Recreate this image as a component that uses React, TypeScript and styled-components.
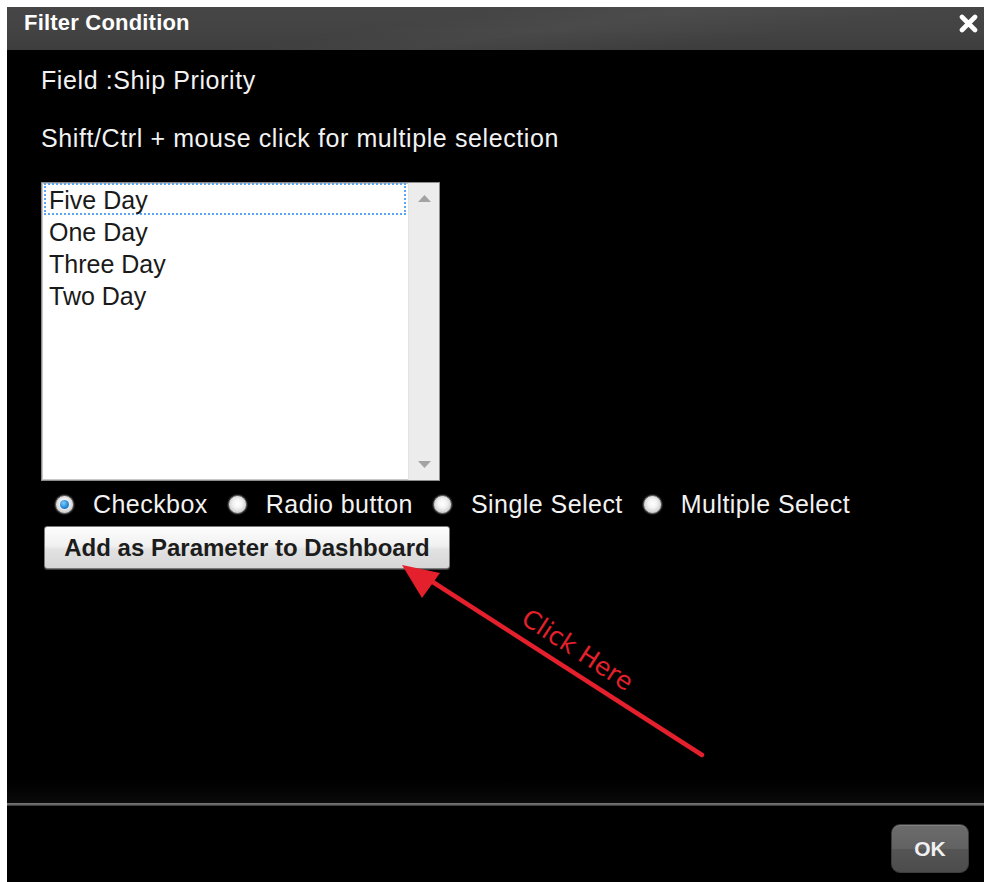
import React from "react";
import styled, { createGlobalStyle } from "styled-components";

const GlobalStyle = createGlobalStyle`
  html, body {
    margin: 0;
    padding: 0;
    background: #ffffff;
  }
  * { box-sizing: border-box; }
`;

const Dialog = styled.div`
  position: relative;
  margin: 7px 0 0 7px;
  width: 977px;
  height: 875px;
  background: #000;
  display: flex;
  flex-direction: column;
  font-family: "Liberation Sans", Arial, sans-serif;
  overflow: hidden;
`;

const Header = styled.div`
  height: 43px;
  flex: none;
  display: flex;
  align-items: center;
  justify-content: space-between;
  padding: 0 5px 11px 17px;
  background:
    linear-gradient(172deg, rgba(255,255,255,0) 40%, rgba(255,255,255,0.035) 55%, rgba(255,255,255,0) 75%),
    linear-gradient(to bottom, #464646 0%, #434343 55%, #3d3d3d 100%);
`;

const Title = styled.div`
  color: #ffffff;
  font-weight: bold;
  font-size: 22px;
  letter-spacing: 0.2px;
`;

const CloseButton = styled.button`
  width: 22px;
  height: 22px;
  padding: 0;
  border: 0;
  background: transparent;
  display: flex;
  align-items: center;
  justify-content: center;
  cursor: pointer;
`;

const Body = styled.div`
  height: 753px;
  flex: none;
  padding: 15px 0 0 34px;
  display: flex;
  flex-direction: column;
  align-items: flex-start;
  background: linear-gradient(to bottom, #000 0%, #000 97%, #0a0a0a 100%);
`;

const Line = styled.div<{ $gap?: number }>`
  color: #f2f2f2;
  font-size: 25px;
  line-height: 30px;
  letter-spacing: 0.6px;
  margin-top: ${(p) => p.$gap ?? 0}px;
`;

const ListBox = styled.div`
  margin-top: 29px;
  width: 399px;
  height: 299px;
  background: #fff;
  border: 1px solid #8c8c8c;
  box-shadow: inset 0 0 0 1px #c8c8c8;
  display: flex;
`;

const Options = styled.div`
  flex: 1;
  padding: 0 2px 0 2px;
  display: flex;
  flex-direction: column;
`;

const Option = styled.div<{ $focused?: boolean }>`
  height: 32px;
  line-height: 30px;
  padding-left: 3px;
  font-size: 25px;
  color: #1a1a1a;
  border: 2px dotted ${(p) => (p.$focused ? "#5aa6f5" : "transparent")};
`;

const ScrollTrack = styled.div`
  width: 31px;
  background: #ececec;
  border-left: 1px solid #e2e2e2;
  display: flex;
  flex-direction: column;
  justify-content: space-between;
  align-items: center;
  padding: 12px 0 12px 0;
`;

const RadioRow = styled.div`
  margin-top: 8px;
  margin-left: 14px;
  height: 30px;
  display: flex;
  align-items: center;
`;

const RadioItem = styled.label`
  display: flex;
  align-items: center;
  margin-right: 20px;
  color: #f2f2f2;
  font-size: 25px;
  letter-spacing: 0.45px;
`;

const RadioDot = styled.span<{ $checked?: boolean }>`
  width: 19px;
  height: 19px;
  border-radius: 50%;
  margin-right: 19px;
  flex: none;
  position: relative;
  border: 1px solid #6e6e6e;
  background: radial-gradient(circle at 50% 45%, #ffffff 0%, #f3f3f3 35%, #cfcfcf 70%, #a9a9a9 100%);
  box-shadow: 0 0 0 1px rgba(255, 255, 255, 0.12);
  &::after {
    content: "";
    display: ${(p) => (p.$checked ? "block" : "none")};
    position: absolute;
    left: 4px;
    top: 4px;
    width: 9px;
    height: 9px;
    border-radius: 50%;
    background: radial-gradient(circle at 40% 35%, #86cdf8 0%, #2a8fdc 50%, #0f5fa8 100%);
  }
`;

const ParamButton = styled.button`
  margin-top: 7px;
  margin-left: 3px;
  width: 406px;
  height: 43px;
  border: 1px solid #7a7a7a;
  border-radius: 3px;
  background: linear-gradient(to bottom, #fdfdfd 0%, #f1f1f1 45%, #e2e2e2 55%, #d6d6d6 100%);
  box-shadow: inset 0 1px 0 #ffffff, 0 1px 0 #3a3a3a;
  font-family: "Liberation Sans", Arial, sans-serif;
  font-weight: bold;
  font-size: 24px;
  color: #1c1c1c;
  padding: 0;
  cursor: pointer;
`;

const Divider = styled.div`
  height: 3px;
  flex: none;
  background: linear-gradient(to bottom, #777 0%, #666 50%, #2c2c2c 100%);
`;

const Footer = styled.div`
  flex: 1;
  display: flex;
  justify-content: flex-end;
  align-items: flex-start;
  padding: 18px 15px 0 0;
  background: #000;
`;

const OkButton = styled.button`
  width: 78px;
  height: 49px;
  border-radius: 9px;
  border: 1px solid #3c3c3c;
  background: linear-gradient(to bottom, #6c6c6c 0%, #626262 50%, #555 52%, #4c4c4c 100%);
  box-shadow: inset 0 1px 0 rgba(255,255,255,0.15);
  color: #f0f0f0;
  font-family: "Liberation Sans", Arial, sans-serif;
  font-weight: bold;
  font-size: 21px;
  padding: 0;
  cursor: pointer;
`;

const Annotation = styled.svg`
  position: absolute;
  left: 0;
  top: 0;
  pointer-events: none;
`;

const CloseIcon = () => (
  <svg width="19" height="19" viewBox="0 0 19 19">
    <path d="M3 3 L16 16 M16 3 L3 16" stroke="#fff" strokeWidth="4.6" strokeLinecap="round" />
  </svg>
);

const ArrowUp = () => (
  <svg width="13" height="7" viewBox="0 0 13 7">
    <polygon points="6.5,0 13,7 0,7" fill="#a3a3a3" />
  </svg>
);

const ArrowDown = () => (
  <svg width="13" height="7" viewBox="0 0 13 7">
    <polygon points="0,0 13,0 6.5,7" fill="#a3a3a3" />
  </svg>
);

const options = ["Five Day", "One Day", "Three Day", "Two Day"];
const modes = ["Checkbox", "Radio button", "Single Select", "Multiple Select"];

export default function App() {
  return (
    <>
      <GlobalStyle />
      <Dialog>
        <Header>
          <Title>Filter Condition</Title>
          <CloseButton aria-label="Close">
            <CloseIcon />
          </CloseButton>
        </Header>
        <Body>
          <Line>Field :Ship Priority</Line>
          <Line $gap={28}>Shift/Ctrl + mouse click for multiple selection</Line>
          <ListBox>
            <Options>
              {options.map((o, i) => (
                <Option key={o} $focused={i === 0}>
                  {o}
                </Option>
              ))}
            </Options>
            <ScrollTrack>
              <ArrowUp />
              <ArrowDown />
            </ScrollTrack>
          </ListBox>
          <RadioRow>
            {modes.map((m, i) => (
              <RadioItem key={m}>
                <RadioDot $checked={i === 0} />
                {m}
              </RadioItem>
            ))}
          </RadioRow>
          <ParamButton>Add as Parameter to Dashboard</ParamButton>
        </Body>
        <Divider />
        <Footer>
          <OkButton>OK</OkButton>
        </Footer>
        <Annotation width="977" height="875" viewBox="0 0 977 875">
          <line x1="695" y1="748" x2="418" y2="570" stroke="#e3202b" strokeWidth="4.5" strokeLinecap="round" />
          <polygon points="395,558 433,566 415,591" fill="#e3202b" />
          <text
            x="0"
            y="0"
            fill="#e3202b"
            fontFamily="'DejaVu Sans', sans-serif"
            fontSize="25"
            textAnchor="middle"
            transform="translate(566 650) rotate(33)"
          >
            Click Here
          </text>
        </Annotation>
      </Dialog>
    </>
  );
}
